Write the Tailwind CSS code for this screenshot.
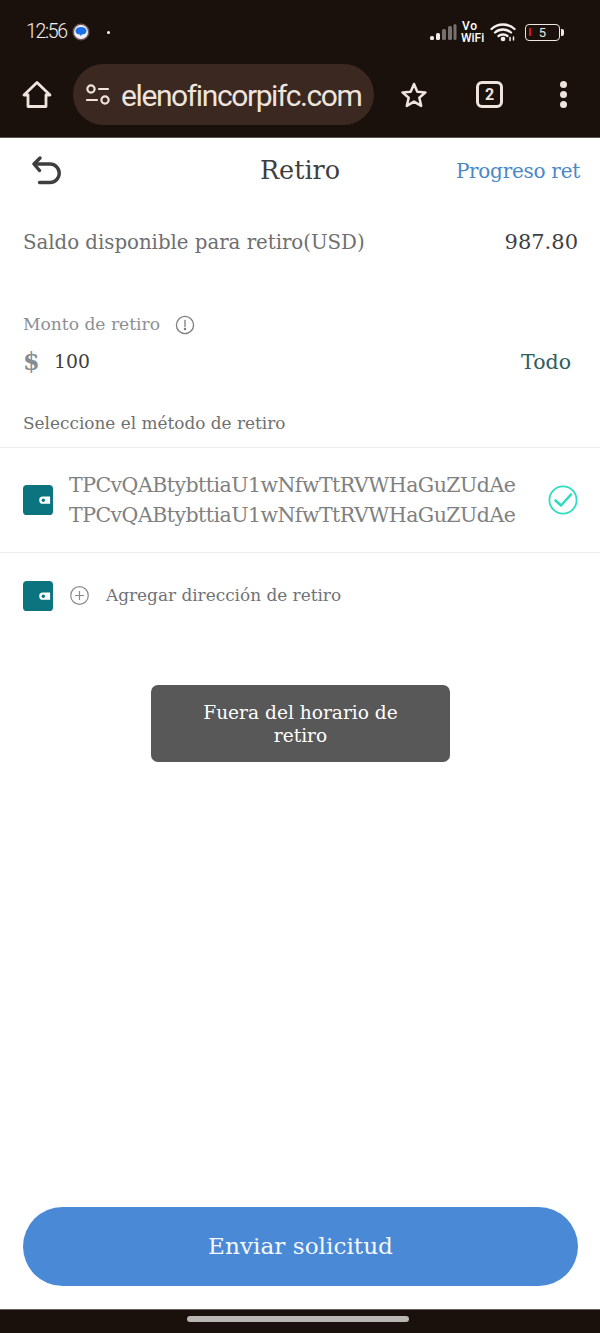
<!DOCTYPE html>
<html lang="es">
<head>
<meta charset="utf-8">
<script src="https://cdn.jsdelivr.net/npm/@tailwindcss/browser@4"></script>
</head>
<body class="m-0 bg-white">
<div class="w-[600px] h-[1333px] flex flex-col overflow-hidden font-['DejaVu_Serif','Liberation_Serif',serif]">
  <!-- Browser chrome -->
  <div class="h-[138px] shrink-0 bg-[#1a110d] border-b border-[#5e5652] flex flex-col font-['Roboto',sans-serif] text-[#efe4dd]">
    <div class="h-[64px] shrink-0 flex items-center justify-between pl-[26px] pr-[36px]">
      <div class="flex items-center">
        <span class="text-[19.500px] tracking-[-1.3px] font-light text-[#f5efec] w-[46px] whitespace-nowrap">12:56</span>
        <svg class="shrink-0" width="18" height="18" viewBox="0 0 18 18"><circle cx="9" cy="9" r="8.500" fill="#6f5a5d"/><circle cx="9" cy="9" r="7" fill="#f1f1f6"/><path d="M3.500 8c0-2.500 2.200-4 5.500-4s5.500 1.500 5.500 4-2.200 3.500-4.500 3.500L8.500 13l-.5-1.600C5.200 11.400 3.500 10.300 3.500 8z" fill="#1b6fe8"/></svg>
        <span class="ml-[17px] w-[3px] h-[3px] rounded-full bg-white"></span>
      </div>
      <div class="flex items-center">
        <svg class="shrink-0" width="28" height="18" viewBox="0 0 28 18"><rect x="1" y="13" width="4" height="4" rx="1.500" fill="#f0ebe8"/><rect x="7" y="10" width="4" height="7" rx="1.500" fill="#f0ebe8"/><rect x="13" y="6" width="4" height="11" rx="1.500" fill="#77716e"/><rect x="19" y="3" width="4" height="14" rx="1.500" fill="#77716e"/><rect x="24.500" y="1" width="3" height="16" rx="1.500" fill="#77716e"/></svg>
        <div class="ml-[4px] w-[25px] text-[12px] leading-[12px] font-medium text-white flex flex-col"><span class="pl-[1px] tracking-[0.8px]">Vo</span><span>WiFi</span></div>
        <svg class="ml-[4px] shrink-0" width="27" height="20" viewBox="0 0 27 20" fill="none" stroke="#f5f0ed" stroke-width="2.300" stroke-linecap="round"><path d="M1.500 7C8 1 18 1 24.500 7"/><path d="M5 10.500c4.500-4 11.500-4 16 0"/><path d="M8.500 14c2.500-2 6.500-2 9 0"/><circle cx="13" cy="17" r="1.200" fill="#f5f0ed"/><path d="M20 15.500v3M23.500 15v3" stroke-width="1.500"/></svg>
        <div class="ml-[8px] w-[35px] h-[17px] rounded-[4px] border-[1.500px] border-[#efe7e2] flex items-center justify-center relative text-[13px] leading-none text-[#efe7e2]"><span class="absolute left-[3px] top-[3px] w-[1.500px] h-[8px] bg-[#d8141c]"></span>5</div>
        <span class="ml-[1px] w-[3px] h-[7px] rounded-r-[2px] bg-[#efe7e2]"></span>
      </div>
    </div>
    <div class="flex items-center h-[61px]">
      <svg class="ml-[22px] shrink-0" width="30" height="30" viewBox="0 0 30 30" fill="none" stroke="#efe4dd" stroke-width="2.800" stroke-linejoin="round" stroke-linecap="round"><path d="M2 15 15 2.500 28 15h-4v11.500H6V15z"/></svg>
      <div class="ml-[21px] w-[301px] h-[61px] shrink-0 rounded-full bg-[#3a2821] flex items-center pl-[13px]">
        <svg class="shrink-0" width="24" height="22" viewBox="0 0 24 22" fill="none" stroke="#efe4dd" stroke-width="2.200" stroke-linecap="round"><circle cx="5" cy="5" r="3.600"/><path d="M13 5h9M1 16h10"/><circle cx="19" cy="16" r="3.600"/></svg>
        <span class="ml-[11px] pt-[2px] text-[30px] leading-none tracking-[-1.4px] text-[#efe4dd] whitespace-nowrap">elenofincorpifc.com</span>
      </div>
      <svg class="ml-[26px] shrink-0" width="28" height="28" viewBox="0 0 28 28" fill="none" stroke="#efe4dd" stroke-width="2.500" stroke-linejoin="round"><path d="m14 3 3.300 7.700 8.200.7-6.200 5.400 1.900 8.100L14 20.600l-7.200 4.300 1.900-8.100-6.200-5.400 8.200-.7z"/></svg>
      <div class="ml-[48px] w-[27px] h-[27px] rounded-[6px] border-[3px] border-[#efe4dd] flex items-center justify-center text-[16px] font-bold leading-none text-[#efe4dd]">2</div>
      <div class="ml-[57px] flex flex-col gap-[3px]"><span class="w-[7px] h-[7px] rounded-full bg-[#efe4dd]"></span><span class="w-[7px] h-[7px] rounded-full bg-[#efe4dd]"></span><span class="w-[7px] h-[7px] rounded-full bg-[#efe4dd]"></span></div>
    </div>
  </div>

  <!-- Page -->
  <div class="flex-1 flex flex-col bg-white">
    <div class="h-[65px] shrink-0 flex items-center justify-between relative pl-[31px] pr-[20px]">
      <svg class="shrink-0" width="30" height="30" viewBox="0 0 30 30" fill="none" stroke="#3e3e3e" stroke-width="3.400" stroke-linecap="round" stroke-linejoin="round"><path d="M9 2 3 8l5.500 6.500"/><path d="M3.500 8H19a9 9 0 0 1 0 18.500H8.500"/></svg>
      <span class="absolute left-0 right-0 text-center text-[25.500px] text-[#3f3f3f] leading-none">Retiro</span>
      <span class="relative text-[20px] tracking-[-0.27px] text-[#4a88c7] leading-none">Progreso ret</span>
    </div>
    <div class="h-[79px] shrink-0 flex items-center justify-between pl-[23px] pr-[22px]">
      <span class="text-[19.800px] tracking-[-0.03px] text-[#6f6f6f] leading-none">Saldo disponible para retiro(USD)</span>
      <span class="text-[21px] text-[#3f3f3f] leading-none">987.80</span>
    </div>
    <div class="pl-[23px] pr-[29px]">
      <div class="mt-[31px] h-[24px] flex items-center">
        <span class="text-[17.100px] text-[#8b8f94] leading-none">Monto de retiro</span>
        <svg class="ml-[15px] shrink-0" width="20" height="20" viewBox="0 0 20 20" fill="none" stroke="#7d7d7d" stroke-width="1.300"><circle cx="10" cy="10" r="8.600"/><path d="M10 5.500v6" stroke-linecap="round"/><circle cx="10" cy="14" r=".6" fill="#7d7d7d"/></svg>
      </div>
      <div class="mt-[7px] h-[36px] flex items-center justify-between">
        <div class="flex items-center">
          <span class="w-[31px] text-[24px] font-bold text-[#868c93] leading-none">$</span>
          <span class="text-[18.800px] text-[#3f3f3f] leading-none">100</span>
        </div>
        <span class="text-[20.500px] text-[#2e5d5e] leading-none">Todo</span>
      </div>
    </div>
    <div class="mt-[24px] h-[44px] shrink-0 flex items-center pl-[23px] pb-[4px] border-b border-[#ececec]">
      <span class="text-[16.900px] text-[#6f6f6f] leading-none">Seleccione el método de retiro</span>
    </div>
    <div class="h-[105px] shrink-0 flex items-center pl-[23px] pr-[22px] border-b border-[#ececec]">
      <svg class="shrink-0 mr-[1px]" width="30" height="30" viewBox="0 0 31 31"><rect width="31" height="31" rx="4" fill="#0b747f"/><path d="M20.500 12H28v7.500h-7.500a3.750 3.750 0 0 1 0-7.500z" fill="#fff"/><circle cx="21" cy="15.750" r="1.700" fill="#0b747f"/></svg>
      <div class="ml-[15px] flex-1 text-[20.500px] leading-[30px] tracking-[-0.53px] text-[#808080] whitespace-nowrap">
        <div>TPCvQABtybttiaU1wNfwTtRVWHaGuZUdAe</div>
        <div>TPCvQABtybttiaU1wNfwTtRVWHaGuZUdAe</div>
      </div>
      <svg class="shrink-0" width="30" height="30" viewBox="0 0 30 30" fill="none" stroke="#2fdcbf" stroke-width="1.800"><circle cx="15" cy="15" r="13.600"/><path d="m7.500 15.500 5.500 5L23 9.500" stroke-width="2.600" stroke-linecap="round" stroke-linejoin="round"/></svg>
    </div>
    <div class="h-[85px] shrink-0 flex items-center pl-[23px]">
      <svg class="shrink-0 mr-[1px]" width="30" height="30" viewBox="0 0 31 31"><rect width="31" height="31" rx="4" fill="#0b747f"/><path d="M20.500 12H28v7.500h-7.500a3.750 3.750 0 0 1 0-7.500z" fill="#fff"/><circle cx="21" cy="15.750" r="1.700" fill="#0b747f"/></svg>
      <svg class="ml-[16px] shrink-0" width="19" height="19" viewBox="0 0 19 19" fill="none" stroke="#8a8a8a" stroke-width="1.200"><circle cx="9.500" cy="9.500" r="8.800"/><path d="M9.500 5v9M5 9.500h9"/></svg>
      <span class="ml-[17px] text-[16.900px] text-[#6f7276] leading-none">Agregar dirección de retiro</span>
    </div>
    <div class="mt-[47px] ml-[151px] w-[299px] h-[77px] rounded-[7px] bg-[#585858] flex items-center justify-center text-center px-[40px] text-[18.600px] leading-[23px] text-white">Fuera del horario de retiro</div>
    <div class="flex-1"></div>
    <button class="ml-[23px] mr-[22px] mb-[23px] h-[79px] pb-[2px] rounded-full bg-[#4a89d6] text-[23.200px] text-[#f5f8fc] leading-none">Enviar solicitud</button>
  </div>

  <!-- Nav bar -->
  <div class="h-[24px] shrink-0 bg-[#1a110d] border-t border-[#6a625e] flex justify-center pt-[6px]">
    <span class="w-[222px] h-[6px] ml-[-4px] rounded-full bg-[#bab6b4]"></span>
  </div>
</div>
</body>
</html>
